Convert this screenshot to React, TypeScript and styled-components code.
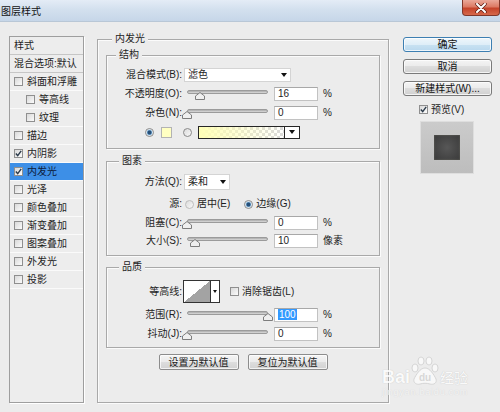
import React from 'react';
import styled, { createGlobalStyle } from 'styled-components';

const GlobalStyle = createGlobalStyle`
  html, body {
    margin: 0;
    padding: 0;
  }
  body {
    width: 500px;
    height: 412px;
    overflow: hidden;
    background: #ececec;
    font-family: "Liberation Sans", "Noto Sans CJK SC", sans-serif;
    font-size: 10px;
    line-height: 14px;
    color: #1e1e1e;
  }
`;

const listItems = [
  { label: '斜面和浮雕' },
  { label: '等高线', indent: true },
  { label: '纹理', indent: true },
  { label: '描边' },
  { label: '内阴影', checked: true },
  { label: '内发光', checked: true, selected: true },
  { label: '光泽' },
  { label: '颜色叠加' },
  { label: '渐变叠加' },
  { label: '图案叠加' },
  { label: '外发光' },
  { label: '投影' },
];

const SLIDER_W = 81;

const Check = ({ checked }: { checked?: boolean }) => (
  <CheckBox>
    {checked && (
      <svg width="7" height="7" viewBox="0 0 7 7">
        <path d="M0.8 3.6 L2.7 5.6 L6.2 0.9" fill="none" stroke="#2b3a4a" strokeWidth="1.4" />
      </svg>
    )}
  </CheckBox>
);

const Slider = ({ pos }: { pos: number }) => (
  <SliderWrap>
    <Rail />
    <Thumb style={{ left: pos * SLIDER_W - 5 }} width="10" height="8" viewBox="0 0 10 8">
      <polygon points="0.5,4 5,0.5 9.5,4 9.5,7.5 0.5,7.5" fill="#efefef" stroke="#7d7d7d" />
    </Thumb>
  </SliderWrap>
);

export default function App() {
  return (
    <>
      <GlobalStyle />
      <Window>
        <TitleBar>
          <Title>图层样式</Title>
          <CloseButton>
            <svg width="12" height="10" viewBox="0 0 12 10">
              <path d="M2 1 L10 9 M10 1 L2 9" stroke="#5a1b12" strokeWidth="3.4" strokeLinecap="round" />
              <path d="M2 1 L10 9 M10 1 L2 9" stroke="#fff" strokeWidth="2" strokeLinecap="round" />
            </svg>
          </CloseButton>
        </TitleBar>

        <Body>
          <StyleList>
            <ListHead>样式</ListHead>
            <ListHead>混合选项:默认</ListHead>
            {listItems.map((item) => (
              <ListItem key={item.label} $indent={item.indent} $selected={item.selected}>
                <Check checked={item.checked} />
                <ItemText>{item.label}</ItemText>
              </ListItem>
            ))}
          </StyleList>

          <MainGroup>
            <Legend $left={14}>内发光</Legend>

            <Group $pad="12px 0 9px">
              <Legend $left={9}>结构</Legend>
              <Row $h={14}>
                <FieldLabel>混合模式(B):</FieldLabel>
                <Dropdown $w={107}>
                  滤色
                  <Caret />
                </Dropdown>
              </Row>
              <Row $h={14} $mt={5}>
                <FieldLabel>不透明度(O):</FieldLabel>
                <Slider pos={0.16} />
                <NumBox>16</NumBox>
                <Unit>%</Unit>
              </Row>
              <Row $h={14} $mt={5}>
                <FieldLabel>杂色(N):</FieldLabel>
                <Slider pos={0} />
                <NumBox>0</NumBox>
                <Unit>%</Unit>
              </Row>
              <ColorRow $h={14} $mt={5}>
                <Radio $on />
                <Swatch />
                <Radio $gap={11} />
                <GradientPicker>
                  <GradientBar />
                  <GradientCaret>
                    <Caret />
                  </GradientCaret>
                </GradientPicker>
              </ColorRow>
            </Group>

            <Group $pad="12px 0 7px" $mt={12}>
              <Legend $left={12}>图素</Legend>
              <Row $h={15}>
                <FieldLabel>方法(Q):</FieldLabel>
                <Dropdown $w={46} $h={16}>
                  柔和
                  <Caret />
                </Dropdown>
              </Row>
              <Row $h={14} $mt={8}>
                <FieldLabel>源:</FieldLabel>
                <Radio $gap={3} $dim />
                <OptionText>居中(E)</OptionText>
                <Radio $on $gap={14} />
                <OptionText>边缘(G)</OptionText>
              </Row>
              <Row $h={14} $mt={5}>
                <FieldLabel>阻塞(C):</FieldLabel>
                <Slider pos={0} />
                <NumBox>0</NumBox>
                <Unit>%</Unit>
              </Row>
              <Row $h={14} $mt={4}>
                <FieldLabel>大小(S):</FieldLabel>
                <Slider pos={0.1} />
                <NumBox>10</NumBox>
                <Unit>像素</Unit>
              </Row>
            </Group>

            <Group $pad="12px 0 6px" $mt={11}>
              <Legend $left={12}>品质</Legend>
              <Row $h={23}>
                <FieldLabel>等高线:</FieldLabel>
                <ContourPicker>
                  <ContourCurve />
                  <ContourCaret>
                    <Caret $small />
                  </ContourCaret>
                </ContourPicker>
                <CheckSlot>
                  <Check />
                </CheckSlot>
                <OptionText>消除锯齿(L)</OptionText>
              </Row>
              <Row $h={14} $mt={5}>
                <FieldLabel>范围(R):</FieldLabel>
                <Slider pos={1} />
                <NumBox>
                  <Highlight>100</Highlight>
                </NumBox>
                <Unit>%</Unit>
              </Row>
              <Row $h={14} $mt={5}>
                <FieldLabel>抖动(J):</FieldLabel>
                <Slider pos={0} />
                <NumBox>0</NumBox>
                <Unit>%</Unit>
              </Row>
            </Group>

            <DefaultsRow>
              <PlainButton>设置为默认值</PlainButton>
              <PlainButton>复位为默认值</PlainButton>
            </DefaultsRow>
          </MainGroup>

          <SideColumn>
            <DialogButton $primary>确定</DialogButton>
            <DialogButton>取消</DialogButton>
            <DialogButton>新建样式(W)...</DialogButton>
            <PreviewToggle>
              <Check checked />
              <OptionText>预览(V)</OptionText>
            </PreviewToggle>
            <PreviewBox>
              <PreviewSwatch />
            </PreviewBox>
          </SideColumn>
        </Body>

        <Watermark>
          <BrandLine>
            <BrandText>Bai</BrandText>
            <svg width="30" height="30" viewBox="0 0 30 30">
              <g fill="#fbfbfb" stroke="#c9c9c9" strokeWidth="0.8">
                <ellipse cx="5" cy="12" rx="3" ry="4" />
                <ellipse cx="11" cy="5" rx="3" ry="4" />
                <ellipse cx="19" cy="5" rx="3" ry="4" />
                <ellipse cx="25" cy="12" rx="3" ry="4" />
                <path d="M15 12 C10 12 6 19 4 23 C3 27 7 29 10 28 C13 27 17 27 20 28 C24 29 27 27 26 23 C24 19 20 12 15 12 Z" />
              </g>
              <text x="15" y="25" textAnchor="middle" fontSize="10" fontWeight="bold" fill="#d4d4d4" fontFamily="Liberation Sans, sans-serif">du</text>
            </svg>
            <BrandCn>经验</BrandCn>
          </BrandLine>
          <BrandUrl>jingyan.baidu.com</BrandUrl>
        </Watermark>
      </Window>
    </>
  );
}

const Window = styled.div`
  position: relative;
  width: 500px;
  height: 412px;
  overflow: hidden;
  background: #ececec;
`;

const TitleBar = styled.div`
  height: 22px;
  display: flex;
  justify-content: space-between;
  align-items: flex-start;
  background: linear-gradient(180deg, #e4ecf6 0%, #d3e0ee 45%, #c6d6e8 100%);
  border-bottom: 1px solid #b9c7d6;
  box-sizing: border-box;
`;

const Title = styled.div`
  padding: 5px 0 0 1px;
  font-size: 10px;
  color: #111;
`;

const CloseButton = styled.div`
  width: 38px;
  height: 16px;
  box-sizing: border-box;
  border: 1px solid #80372a;
  border-top: none;
  border-radius: 0 0 4px 4px;
  background: linear-gradient(180deg, #eaa899 0%, #dc7a64 45%, #c5432a 55%, #d6684b 100%);
  display: flex;
  align-items: center;
  justify-content: center;
`;

const Body = styled.div`
  display: flex;
  align-items: flex-start;
  padding: 14px 0 0 9px;
`;

const StyleList = styled.div`
  width: 75px;
  height: 367px;
  box-sizing: border-box;
  border: 1px solid #9e9e9e;
  box-shadow: 1px 1px 0 #fff;
  background: #ededed;
`;

const ListHead = styled.div`
  height: 17px;
  line-height: 17px;
  padding-left: 4px;
  border-bottom: 1px solid #c6c6c6;
  white-space: nowrap;
`;

const ListItem = styled.div<{ $indent?: boolean; $selected?: boolean }>`
  height: 17px;
  display: flex;
  align-items: center;
  padding-left: ${(p) => (p.$indent ? 16 : 4)}px;
  border-bottom: 1px solid #fafafa;
  background: ${(p) => (p.$selected ? '#3d8fe7' : 'transparent')};
  color: ${(p) => (p.$selected ? '#0d1c3a' : '#1e1e1e')};
`;

const ItemText = styled.span`
  margin-left: 4px;
  white-space: nowrap;
`;

const CheckBox = styled.span`
  flex: none;
  width: 9px;
  height: 9px;
  box-sizing: border-box;
  border: 1px solid #8f8f8f;
  background: linear-gradient(135deg, #d9d9d9, #fbfbfb);
  display: flex;
  align-items: center;
  justify-content: center;
`;

const Group = styled.div<{ $pad?: string; $mt?: number }>`
  position: relative;
  border: 1px solid #a9a9a9;
  box-shadow: 1px 1px 0 #fbfbfb, inset 1px 1px 0 #fbfbfb;
  padding: ${(p) => p.$pad || '0'};
  margin-top: ${(p) => p.$mt || 0}px;
`;

const MainGroup = styled(Group)`
  width: 292px;
  height: 364px;
  box-sizing: border-box;
  margin: 3px 0 0 13px;
  padding: 15px 8px 0;
`;

const Legend = styled.span<{ $left: number }>`
  position: absolute;
  top: -8px;
  left: ${(p) => p.$left}px;
  padding: 0 3px;
  background: #ececec;
  line-height: 14px;
`;

const Row = styled.div<{ $h: number; $mt?: number }>`
  height: ${(p) => p.$h}px;
  margin-top: ${(p) => p.$mt || 0}px;
  display: flex;
  align-items: center;
`;

const ColorRow = styled(Row)`
  padding-left: 38px;
`;

const FieldLabel = styled.span`
  flex: none;
  width: 75px;
  text-align: right;
  white-space: nowrap;
`;

const Dropdown = styled.div<{ $w: number; $h?: number }>`
  width: ${(p) => p.$w}px;
  height: ${(p) => p.$h || 14}px;
  margin-left: 2px;
  box-sizing: border-box;
  background: #fff;
  border: 1px solid #d4d4d4;
  padding: 0 3px;
  display: flex;
  align-items: center;
  justify-content: space-between;
`;

const Caret = styled.span<{ $small?: boolean }>`
  width: 0;
  height: 0;
  border-left: ${(p) => (p.$small ? 2 : 3)}px solid transparent;
  border-right: ${(p) => (p.$small ? 2 : 3)}px solid transparent;
  border-top: ${(p) => (p.$small ? 3 : 4)}px solid #111;
`;

const SliderWrap = styled.div`
  position: relative;
  flex: none;
  width: ${SLIDER_W}px;
  height: 14px;
  margin-left: 5px;
`;

const Rail = styled.div`
  margin-top: 3px;
  height: 4px;
  box-sizing: border-box;
  border: 1px solid #9b9b9b;
  border-radius: 2px;
  background: linear-gradient(180deg, #a9a9a9, #dcdcdc);
`;

const Thumb = styled.svg`
  position: absolute;
  top: 5px;
`;

const NumBox = styled.div`
  flex: none;
  width: 44px;
  height: 14px;
  margin-left: 6px;
  box-sizing: border-box;
  background: #fff;
  border: 1px solid #c2c2c2;
  border-top-color: #a8a8a8;
  padding-left: 3px;
  line-height: 12px;
`;

const Highlight = styled.span`
  background: #3399ff;
  color: #fff;
  padding: 0 1px;
`;

const Unit = styled.span`
  margin-left: 5px;
  white-space: nowrap;
`;

const Radio = styled.span<{ $on?: boolean; $dim?: boolean; $gap?: number }>`
  flex: none;
  width: 9px;
  height: 9px;
  margin-left: ${(p) => p.$gap || 0}px;
  box-sizing: border-box;
  border-radius: 50%;
  border: 1px solid ${(p) => (p.$dim ? '#bdbdbd' : '#8a8a8a')};
  background: ${(p) =>
    p.$on
      ? 'radial-gradient(circle, #274f78 0 1.6px, #7fb0d6 2.4px, #eef3f7 3.2px)'
      : 'linear-gradient(135deg, #dcdcdc, #f8f8f8)'};
`;

const OptionText = styled.span`
  margin-left: 3px;
  white-space: nowrap;
`;

const Swatch = styled.span`
  flex: none;
  width: 11px;
  height: 11px;
  margin-left: 7px;
  box-sizing: border-box;
  border: 1px solid #b3b3b3;
  background: #ffffc2;
`;

const GradientPicker = styled.div`
  display: flex;
  height: 13px;
  margin-left: 6px;
  box-sizing: border-box;
  border: 1px solid #262626;
`;

const GradientBar = styled.div`
  width: 85px;
  background: linear-gradient(to right, #ffffb6, rgba(255, 255, 182, 0)),
    repeating-conic-gradient(#dadada 0 25%, #ffffff 0 50%) 0 0 / 6px 6px;
`;

const GradientCaret = styled.div`
  width: 14px;
  border-left: 1px solid #262626;
  background: #fff;
  display: flex;
  align-items: center;
  justify-content: center;
`;

const ContourPicker = styled.div`
  display: flex;
  height: 23px;
  margin-left: 1px;
  box-sizing: border-box;
  border: 1px solid #333;
  background: #fff;
`;

const ContourCurve = styled.div`
  width: 26px;
  background: linear-gradient(to top left, #a3a3a3 50%, #ffffff 50%);
`;

const ContourCaret = styled.div`
  width: 8px;
  border-left: 1px solid #333;
  display: flex;
  align-items: center;
  justify-content: center;
`;

const CheckSlot = styled.span`
  margin-left: 10px;
  display: flex;
`;

const DefaultsRow = styled.div`
  display: flex;
  justify-content: center;
  gap: 9px;
  margin-top: 6px;
`;

const PlainButton = styled.button`
  width: 80px;
  height: 16px;
  padding: 0;
  border: 1px solid #8c8c8c;
  border-radius: 2px;
  background: linear-gradient(180deg, #f4f4f4 0%, #ebebeb 50%, #dddddd 50%, #d2d2d2 100%);
  box-shadow: inset 0 0 0 1px rgba(255, 255, 255, 0.7);
  font: inherit;
  color: #1a1a1a;
  line-height: 13px;
`;

const SideColumn = styled.div`
  width: 89px;
  margin: 1px 0 0 14px;
  display: flex;
  flex-direction: column;
  gap: 7px;
`;

const DialogButton = styled.button<{ $primary?: boolean }>`
  height: 15px;
  padding: 0;
  border: 1px solid ${(p) => (p.$primary ? '#3d7fb2' : '#7a7a7a')};
  border-radius: 3px;
  background: ${(p) =>
    p.$primary
      ? 'linear-gradient(180deg, #eef6fb 0%, #dfeef8 50%, #c9e2f2 50%, #b9d8ee 100%)'
      : 'linear-gradient(180deg, #f4f4f4 0%, #ebebeb 50%, #dddddd 50%, #d0d0d0 100%)'};
  box-shadow: inset 0 0 0 1px rgba(255, 255, 255, 0.75);
  font: inherit;
  color: #111;
  line-height: 13px;
`;

const PreviewToggle = styled.div`
  height: 11px;
  margin-top: 1px;
  padding-left: 16px;
  display: flex;
  align-items: center;
`;

const PreviewBox = styled.div`
  width: 54px;
  height: 53px;
  margin: -1px 0 0 17px;
  box-sizing: border-box;
  border: 1px solid #dedede;
  background: linear-gradient(180deg, #cbcbcb, #bdbdbd);
  display: flex;
  align-items: center;
  justify-content: center;
`;

const PreviewSwatch = styled.div`
  width: 26px;
  height: 25px;
  background: radial-gradient(circle, #575757 0%, #454545 60%, #3a3a3a 100%);
  box-shadow: inset 0 0 2px rgba(255, 255, 220, 0.25);
`;

const Watermark = styled.div`
  position: absolute;
  left: 382px;
  top: 356px;
  opacity: 0.85;
  pointer-events: none;
`;

const BrandLine = styled.div`
  display: flex;
  align-items: flex-end;
`;

const BrandText = styled.span`
  font-size: 18px;
  line-height: 18px;
  font-weight: bold;
  color: #fdfdfd;
  text-shadow: 0 0 1px #b5b5b5;
`;

const BrandCn = styled.span`
  font-size: 14px;
  line-height: 16px;
  color: #fdfdfd;
  text-shadow: 0 0 1px #b5b5b5;
`;

const BrandUrl = styled.div`
  margin-top: 1px;
  font-size: 9px;
  line-height: 10px;
  letter-spacing: 0.8px;
  color: #f6f6f6;
  text-shadow: 0 0 1px #c8c8c8;
`;
